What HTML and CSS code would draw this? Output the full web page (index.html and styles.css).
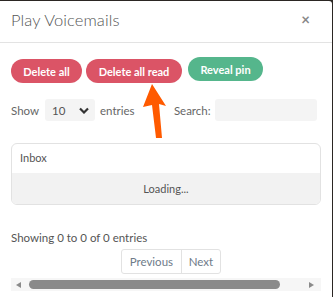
FILE: index.html
```html
<!DOCTYPE html>
<html>
<head>
<meta charset="utf-8">
<link rel="stylesheet" href="styles.css">
</head>
<body>
<div class="modal">
  <div class="modal-header">
    <span class="modal-title">Play Voicemails</span>
    <span class="close">&times;</span>
  </div>
  <div class="modal-body">
    <div class="actions">
      <button class="btn btn-red">Delete all</button>
      <button class="btn btn-red">Delete all read</button>
      <button class="btn btn-green">Reveal pin</button>
    </div>
    <div class="controls">
      <label class="length">Show
        <span class="select">10
          <svg width="10" height="7" viewBox="0 0 10 7"><path d="M1 1.5 L5 5.5 L9 1.5" fill="none" stroke="#333" stroke-width="2.2"/></svg>
        </span>
        entries</label>
      <label class="search">Search: <span class="input"></span></label>
    </div>
    <div class="table">
      <div class="thead">Inbox</div>
      <div class="tbody">Loading...</div>
    </div>
    <div class="info">Showing 0 to 0 of 0 entries</div>
    <div class="pager">
      <span class="page">Previous</span><span class="page">Next</span>
    </div>
    <div class="scrollbar">
      <span class="arrow-left"></span>
      <span class="thumb"></span>
      <span class="arrow-right"></span>
    </div>
  </div>
  <svg class="pointer" width="333" height="297" viewBox="0 0 333 297">
    <polygon points="152,84 166,106 159,104 162,138 156,138 152,105 143,107" fill="#ff5a00"/>
  </svg>
</div>
</body>
</html>
```
FILE: styles.css
```css
html, body {
  margin: 0;
  padding: 0;
}
body {
  background: #2b2623;
  width: 333px;
  height: 297px;
  overflow: hidden;
  font-family: "Lato", "Open Sans", sans-serif;
  color: #555;
}
.modal {
  position: relative;
  margin: 1px 0 0 -4px;
  width: 336px;
  height: 300px;
  background: #fff;
  border-radius: 5px 3px 0 0;
}
.modal-header {
  height: 41px;
  border-bottom: 1px solid #e3e3e3;
  display: flex;
  align-items: center;
  justify-content: space-between;
  padding: 0 22px 0 15px;
}
.modal-title {
  font-size: 16.5px;
  font-weight: 300;
  color: #555;
  letter-spacing: 0.1px;
  margin-top: -3px;
}
.close {
  font-size: 15px;
  font-weight: bold;
  color: #888;
  margin-top: -5px;
}
.modal-body {
  padding: 14px 15px 0 15px;
}
.actions {
  display: flex;
  align-items: flex-start;
}
.btn {
  border: none;
  height: 24px;
  border-radius: 12px;
  color: #fff;
  font-family: inherit;
  font-size: 11px;
  font-weight: bold;
  padding: 0;
  margin: 0;
}
.btn-red {
  background: #db5466;
  margin-top: 2px;
}
.btn-red:nth-child(1) { width: 71px; margin-right: 4px; }
.btn-red:nth-child(2) { width: 96px; margin-right: 6px; }
.btn-green {
  background: #55b68c;
  width: 75px;
}
.controls {
  display: flex;
  align-items: center;
  margin-top: 16px;
  font-size: 11.5px;
  color: #666;
  height: 22px;
}
.length {
  display: flex;
  align-items: center;
  width: 165px;
}
.select {
  display: flex;
  align-items: center;
  justify-content: space-between;
  width: 50px;
  height: 22px;
  box-sizing: border-box;
  padding: 0 6px 0 7px;
  background: #f4f4f4;
  border-radius: 3px;
  margin: 0 5px 0 6px;
  color: #555;
}
.search {
  display: flex;
  align-items: center;
  justify-content: space-between;
  width: 145px;
}
.input {
  width: 102px;
  height: 22px;
  background: #f4f4f4;
  border-radius: 3px;
}
.table {
  margin-top: 22px;
  width: 310px;
  border: 1px solid #e2e2e2;
  border-radius: 6px;
  box-sizing: border-box;
  overflow: hidden;
  font-size: 11px;
  color: #555;
}
.thead {
  height: 29px;
  line-height: 27px;
  padding-left: 8px;
}
.tbody {
  height: 31px;
  line-height: 31px;
  text-align: center;
  background: #f2f2f2;
}
.info {
  margin-top: 26px;
  font-size: 11.5px;
  color: #555;
  height: 14px;
}
.pager {
  display: flex;
  margin: 4px 0 0 110px;
  width: 100px;
  border: 1px solid #e2e2e2;
  border-radius: 3px;
  height: 25px;
  box-sizing: border-box;
}
.page {
  display: flex;
  align-items: center;
  justify-content: center;
  font-size: 11.5px;
  color: #6e7b89;
}
.page:first-child {
  width: 60px;
  border-right: 1px solid #e2e2e2;
}
.page:last-child {
  width: 39px;
}
.scrollbar {
  display: flex;
  align-items: center;
  margin-top: 4px;
  width: 310px;
  height: 13px;
  background: #f6f6f6;
}
.arrow-left {
  width: 0;
  height: 0;
  border-top: 3px solid transparent;
  border-bottom: 3px solid transparent;
  border-right: 5px solid #8a8a8a;
  margin-left: 5px;
}
.thumb {
  width: 251px;
  height: 9px;
  border-radius: 5px;
  background: #8a8a8a;
  margin-left: 8px;
}
.arrow-right {
  width: 0;
  height: 0;
  border-top: 3px solid transparent;
  border-bottom: 3px solid transparent;
  border-left: 5px solid #8a8a8a;
  margin-left: 29px;
}
.pointer {
  position: absolute;
  left: 4px;
  top: -1px;
  pointer-events: none;
}
```
